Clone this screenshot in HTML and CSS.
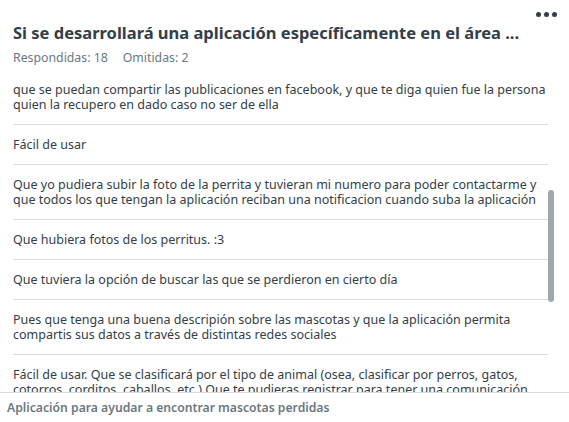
FILE: index.html
```html
<!DOCTYPE html>
<html lang="es">
<head>
<meta charset="utf-8">
<link rel="stylesheet" href="styles.css">
</head>
<body>
<div class="card">
  <div class="head">
    <h1 class="title">Si se desarrollará una aplicación específicamente en el área ...</h1>
    <div class="more"><span></span><span></span><span></span></div>
  </div>
  <div class="meta"><span>Respondidas: 18</span><span>Omitidas: 2</span></div>
  <div class="listwrap">
    <ul class="list">
      <li>que se puedan compartir las publicaciones en facebook, y que te diga quien fue la persona quien la recupero en dado caso no ser de ella</li>
      <li>Fácil de usar</li>
      <li>Que yo pudiera subir la foto de la perrita y tuvieran mi numero para poder contactarme y que todos los que tengan la aplicación reciban una notificacion cuando suba la aplicación</li>
      <li>Que hubiera fotos de los perritus. :3</li>
      <li>Que tuviera la opción de buscar las que se perdieron en cierto día</li>
      <li>Pues que tenga una buena descripión sobre las mascotas y que la aplicación permita compartis sus datos a través de distintas redes sociales</li>
      <li>Fácil de usar. Que se clasificará por el tipo de animal (osea, clasificar por perros, gatos, cotorros, corditos, caballos, etc.) Que te pudieras registrar para tener una comunicación</li>
    </ul>
    <div class="thumb"></div>
  </div>
  <div class="foot">Aplicación para ayudar a encontrar mascotas perdidas</div>
</div>
</body>
</html>
```
FILE: styles.css
```css
* { box-sizing: border-box; }
html, body { margin: 0; padding: 0; background: #fff; }
body { font-family: "Noto Sans", "Open Sans", sans-serif; color: #333e48; }
.card { width: 569px; height: 422px; display: flex; flex-direction: column; }
.head { position: relative; padding: 22px 13px 0 13px; }
.title { margin: 0; font-size: 16.5px; line-height: 21px; font-weight: 700; color: #333e48; white-space: nowrap; }
.more { position: absolute; right: 12px; top: 12px; display: flex; gap: 3px; }
.more span { width: 5px; height: 5px; border-radius: 50%; background: #333e48; }
.meta { padding: 7px 13px 0 13px; font-size: 12.3px; line-height: 16px; color: #6b787f; display: flex; gap: 15px; }
.listwrap { position: relative; flex: 1; overflow: hidden; margin-top: 4px; padding: 0 21px 0 13px; }
.list { list-style: none; margin: 0; padding: 0; }
.list li { font-size: 12.5px; line-height: 15px; color: #333e48; padding: 12px 0; border-bottom: 1px solid #d9dcde; }
.thumb { position: absolute; right: 15px; top: 120px; width: 6px; height: 112px; border-radius: 3px; background: #a0a7ad; }
.foot { border-top: 1px solid #d9dcde; padding: 6px 7px 0 7px; height: 30px; font-size: 12.2px; font-weight: 600; color: #6b787f; }
```
